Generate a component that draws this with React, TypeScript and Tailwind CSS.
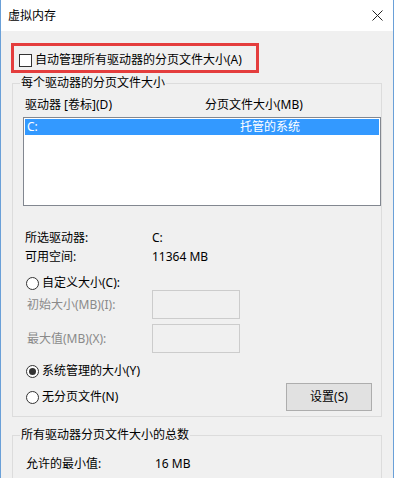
import React from 'react';

function Radio({ checked = false }: { checked?: boolean }) {
  return (
    <span className="ml-[1px] flex h-[13px] w-[13px] shrink-0 items-center justify-center rounded-full border border-[#333333] bg-white">
      {checked && <span className="h-[7px] w-[7px] rounded-full bg-[#333333]" />}
    </span>
  );
}

function Legend({ children }: { children: React.ReactNode }) {
  return <legend className="ml-[7px] px-[1px] leading-4">{children}</legend>;
}

export default function App() {
  return (
    <div className="h-[478px] w-full overflow-hidden border-x border-[#6aa0d8] bg-[#f0f0f0] font-['Noto_Sans','Noto_Sans_CJK_SC',sans-serif] text-[12px] text-black">
      {/* title bar */}
      <div className="flex h-[31px] items-center justify-between bg-white pl-[7px] pr-[10px]">
        <span className="leading-4">虚拟内存</span>
        <svg width="11" height="11" viewBox="0 0 11 11" className="text-[#222]">
          <path d="M0.5 0.5 L10.5 10.5 M10.5 0.5 L0.5 10.5" stroke="currentColor" strokeWidth="1" />
        </svg>
      </div>

      {/* auto manage checkbox, highlighted */}
      <div className="ml-[10px] mt-[12px] flex h-[30px] w-[248px] items-center gap-[3px] border-[3px] border-[#e43d3d] pl-[5px] pt-[4px]">
        <span className="h-[13px] w-[13px] shrink-0 border border-[#333333] bg-white" />
        <span className="leading-4">自动管理所有驱动器的分页文件大小(A)</span>
      </div>

      {/* per drive group */}
      <fieldset className="mx-[11px] mt-[2px] border border-[#dcdcdc]">
        <Legend>每个驱动器的分页文件大小</Legend>
        <div className="pb-[5px] pl-[12px]">
          <div className="mt-[6px] flex leading-4">
            <span className="w-[180px]">驱动器 [卷标](D)</span>
            <span>分页文件大小(MB)</span>
          </div>

          <div className="-ml-[2px] mt-[4px] h-[89px] w-[358px] border border-[#828790] bg-white p-[1px]">
            <div className="flex h-[16px] bg-[#3399ff] leading-4 text-white">
              <span className="w-[215px] pl-[2px]">C:</span>
              <span>托管的系统</span>
            </div>
          </div>

          <div className="mt-[24px] flex leading-4">
            <span className="w-[127px]">所选驱动器:</span>
            <span>C:</span>
          </div>
          <div className="mt-[3px] flex leading-4">
            <span className="w-[127px]">可用空间:</span>
            <span>11364 MB</span>
          </div>

          <div className="mt-[11px] flex h-[14px] items-center gap-[3px] leading-4">
            <Radio />
            <span>自定义大小(C):</span>
          </div>
          <div className="flex items-center">
            <span className="w-[127px] pl-[2px] leading-4 text-[#8a8a8a]">初始大小(MB)(I):</span>
            <span className="h-[29px] w-[88px] border border-[#cccccc] bg-[#f0f0f0]" />
          </div>
          <div className="mt-[5px] flex items-center">
            <span className="w-[127px] pl-[2px] leading-4 text-[#8a8a8a]">最大值(MB)(X):</span>
            <span className="h-[29px] w-[88px] border border-[#cccccc] bg-[#f0f0f0]" />
          </div>

          <div className="mt-[11px] flex h-[14px] items-center gap-[3px] leading-4">
            <Radio checked />
            <span>系统管理的大小(Y)</span>
          </div>
          <div className="mt-[5px] flex h-[28px] items-center">
            <div className="flex w-[261px] items-center gap-[3px] leading-4">
              <Radio />
              <span>无分页文件(N)</span>
            </div>
            <button className="h-[28px] w-[86px] border border-[#adadad] bg-[#e1e1e1] leading-4">
              设置(S)
            </button>
          </div>
        </div>
      </fieldset>

      {/* totals group */}
      <fieldset className="mx-[11px] mt-[10px] h-[80px] border border-[#dcdcdc]">
        <Legend>所有驱动器分页文件大小的总数</Legend>
        <div className="pl-[13px]">
          <div className="mt-[13px] flex leading-4">
            <span className="w-[129px]">允许的最小值:</span>
            <span>16 MB</span>
          </div>
        </div>
      </fieldset>
    </div>
  );
}
